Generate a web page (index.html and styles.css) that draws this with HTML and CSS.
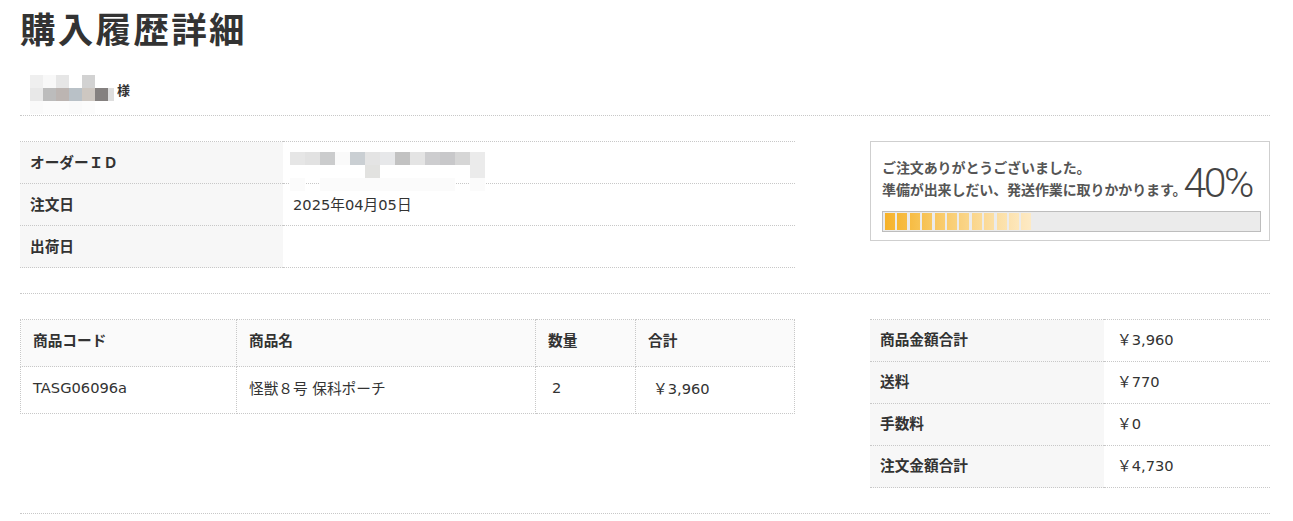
FILE: index.html
```html
<!DOCTYPE html>
<html lang="ja">
<head>
  <meta charset="UTF-8" />
  <title>購入履歴詳細</title>
  <link rel="stylesheet" href="styles.css">
</head>
<body>
  <div id="page">
    <h1>購入履歴詳細</h1>

    <div class="customer">
      <div class="blur name-blur">
        <div class="blur-row">
          <span style="background:#efefef"></span><span style="background:#f8f8f8"></span><span style="background:#e6e6e6"></span><span></span><span style="background:#d2d2d2"></span>
        </div>
        <div class="blur-row">
          <span style="background:#e8e8e8"></span><span style="background:#bcbcbc"></span><span style="background:#bcb5b2"></span><span style="background:#b9c1c7"></span><span style="background:#cdc7c1"></span><span style="background:#858180"></span><span class="half" style="background:#dedede"></span>
        </div>
        <div class="blur-row">
          <span style="background:#fafafa"></span><span style="background:#fcfcfc"></span><span style="background:#fcfcfc"></span><span style="background:#fafafa"></span><span style="background:#fcfcfc"></span>
        </div>
      </div>
      <span class="sama">様</span>
    </div>

    <div class="section">
      <table class="info">
        <tr>
          <th>オーダーＩＤ</th>
          <td>
            <div class="blur id-blur">
              <div class="blur-row">
                <span style="background:#e6e6e6"></span><span style="background:#e2e2e2"></span><span style="background:#cbcccd"></span><span style="background:#fafafa"></span><span style="background:#cacfd3"></span><span style="background:#e4e4e4"></span><span style="background:#e7e8ea"></span><span style="background:#c2c2c2"></span><span style="background:#e4e4e4"></span><span style="background:#cdcdcf"></span><span style="background:#c8c8ca"></span><span style="background:#d6d6d6"></span><span style="background:#ebebeb"></span>
              </div>
              <div class="blur-row">
                <span></span><span></span><span></span><span></span><span></span><span style="background:#e2e2e0"></span><span></span><span></span><span></span><span></span><span></span><span></span><span style="background:#ebebeb"></span>
              </div>
              <div class="blur-row">
                <span style="background:#fbfbfb"></span><span></span><span style="background:#fbfbfb"></span><span style="background:#fbfbfb"></span><span style="background:#fbfbfb"></span><span style="background:#fbfbfb"></span><span style="background:#fbfbfb"></span><span style="background:#fbfbfb"></span><span style="background:#fbfbfb"></span><span style="background:#fbfbfb"></span><span style="background:#fbfbfb"></span><span></span><span style="background:#fbfbfb"></span>
              </div>
            </div>
          </td>
        </tr>
        <tr>
          <th>注文日</th>
          <td>2025年04月05日</td>
        </tr>
        <tr>
          <th>出荷日</th>
          <td></td>
        </tr>
      </table>

      <div class="progress">
        <div class="progress-head">
          <p>ご注文ありがとうございました。<br>準備が出来しだい、発送作業に取りかかります。</p>
          <span class="percent">40%</span>
        </div>
        <div class="bar">
          <span style="background:linear-gradient(90deg,#f6b128,#f7b838)"></span>
          <span style="background:linear-gradient(90deg,#f6b735,#f7bd45)"></span>
          <span style="background:linear-gradient(90deg,#f7bc43,#f8c353)"></span>
          <span style="background:linear-gradient(90deg,#f7c151,#f8c862)"></span>
          <span style="background:linear-gradient(90deg,#f8c660,#f9cd70)"></span>
          <span style="background:linear-gradient(90deg,#f9cb6e,#f9d27e)"></span>
          <span style="background:linear-gradient(90deg,#f9d07c,#fad68b)"></span>
          <span style="background:linear-gradient(90deg,#fad58a,#fbdb98)"></span>
          <span style="background:linear-gradient(90deg,#fbd997,#fbdfa4)"></span>
          <span style="background:linear-gradient(90deg,#fbdea3,#fce3b0)"></span>
          <span style="background:linear-gradient(90deg,#fce2af,#fde7bb)"></span>
          <span style="background:linear-gradient(90deg,#fde6ba,#fdeac5)"></span>
        </div>
      </div>
    </div>

    <div class="section">
      <table class="items">
        <tr>
          <th class="col-code">商品コード</th>
          <th class="col-name">商品名</th>
          <th class="col-qty">数量</th>
          <th>合計</th>
        </tr>
        <tr>
          <td>TASG06096a</td>
          <td>怪獣８号 保科ポーチ</td>
          <td class="qty">2</td>
          <td class="total">￥3,960</td>
        </tr>
      </table>

      <table class="summary">
        <tr>
          <th>商品金額合計</th>
          <td>￥3,960</td>
        </tr>
        <tr>
          <th>送料</th>
          <td>￥770</td>
        </tr>
        <tr>
          <th>手数料</th>
          <td>￥0</td>
        </tr>
        <tr>
          <th>注文金額合計</th>
          <td>￥4,730</td>
        </tr>
      </table>
    </div>
  </div>
</body>
</html>
```

FILE: styles.css
```css
* {
  margin: 0;
  padding: 0;
  box-sizing: border-box;
}

body {
  font-family: "DejaVu Sans", "Noto Sans CJK JP", sans-serif;
  color: #333;
  background: #fff;
  font-size: 14.667px;
}

#page {
  width: 1250px;
  margin-left: 20px;
}

h1 {
  font-family: "Noto Sans CJK JP", sans-serif;
  font-size: 35.5px;
  letter-spacing: 2.3px;
  font-weight: bold;
  line-height: 56px;
  height: 56px;
}

.customer {
  display: flex;
  align-items: flex-start;
  height: 60px;
  padding-left: 10px;
  border-bottom: 1px dotted #c8c8c8;
}

.blur {
  display: flex;
  flex-direction: column;
}

.blur-row {
  display: flex;
}

.blur-row span {
  display: block;
  width: 13px;
  height: 13px;
}

.blur-row span.half {
  width: 6px;
}

.name-blur {
  margin-top: 19px;
}

.sama {
  font-family: "Noto Sans CJK JP", sans-serif;
  font-size: 13px;
  font-weight: bold;
  margin-left: 3px;
  margin-top: 24px;
}

.section {
  display: flex;
  justify-content: space-between;
  align-items: flex-start;
  padding: 25px 0 25px;
  border-bottom: 1px dotted #c8c8c8;
}

table {
  border-collapse: collapse;
}

th {
  font-family: "Noto Sans CJK JP", sans-serif;
}

.info {
  width: 775px;
}

.info th, .info td {
  height: 42px;
  border-top: 1px dotted #c8c8c8;
  border-bottom: 1px dotted #c8c8c8;
  text-align: left;
  vertical-align: middle;
  padding-bottom: 3px;
}

.info th {
  width: 263px;
  background: #f7f7f7;
  padding-left: 10px;
  font-weight: bold;
}

.info td {
  padding-left: 10px;
}

.id-blur {
  margin-top: 8px;
  margin-bottom: -12px;
  margin-left: -3px;
}

.id-blur .blur-row span {
  width: 15px;
}

.progress {
  width: 400px;
  height: 100px;
  border: 1px solid #cfcfcf;
  padding: 10px 8px 0 11px;
}

.progress-head {
  display: flex;
  align-items: flex-start;
  height: 59px;
}

.progress-head p {
  font-family: "Noto Sans CJK JP", sans-serif;
  font-size: 14px;
  font-weight: bold;
  color: #555;
  line-height: 22px;
  letter-spacing: -0.1px;
  margin-top: 4px;
}

.percent {
  font-family: Roboto, "Noto Sans", sans-serif;
  font-weight: 300;
  font-size: 41px;
  line-height: 42px;
  color: #444;
  margin-left: -3px;
  margin-top: 10px;
  letter-spacing: -2.5px;
}

.bar {
  display: flex;
  gap: 2.4px;
  width: 379px;
  height: 21px;
  border: 1px solid #bdbdbd;
  background: #ebebeb;
  padding: 1px 2px;
}

.bar span {
  display: block;
  width: 10px;
  height: 17px;
}

.items {
  width: 775px;
}

.items th, .items td {
  border: 1px dotted #c8c8c8;
  text-align: left;
  vertical-align: middle;
  height: 47px;
  padding-left: 12px;
  padding-bottom: 5px;
}

.items th {
  background: #fafafa;
  font-weight: bold;
  padding-bottom: 7px;
}

.items .col-code {
  width: 216px;
}

.items .col-name {
  width: 299px;
}

.items .col-qty {
  width: 100px;
}

.items td.qty {
  padding-left: 16px;
}

.items td.total {
  padding-left: 17px;
}

.summary {
  width: 400px;
}

.summary th, .summary td {
  height: 42px;
  border-top: 1px dotted #c8c8c8;
  border-bottom: 1px dotted #c8c8c8;
  text-align: left;
  vertical-align: middle;
  padding-bottom: 5px;
}

.summary th {
  width: 234px;
  background: #f7f7f7;
  padding-left: 10px;
  font-weight: bold;
}

.summary td {
  padding-left: 13px;
}
```
